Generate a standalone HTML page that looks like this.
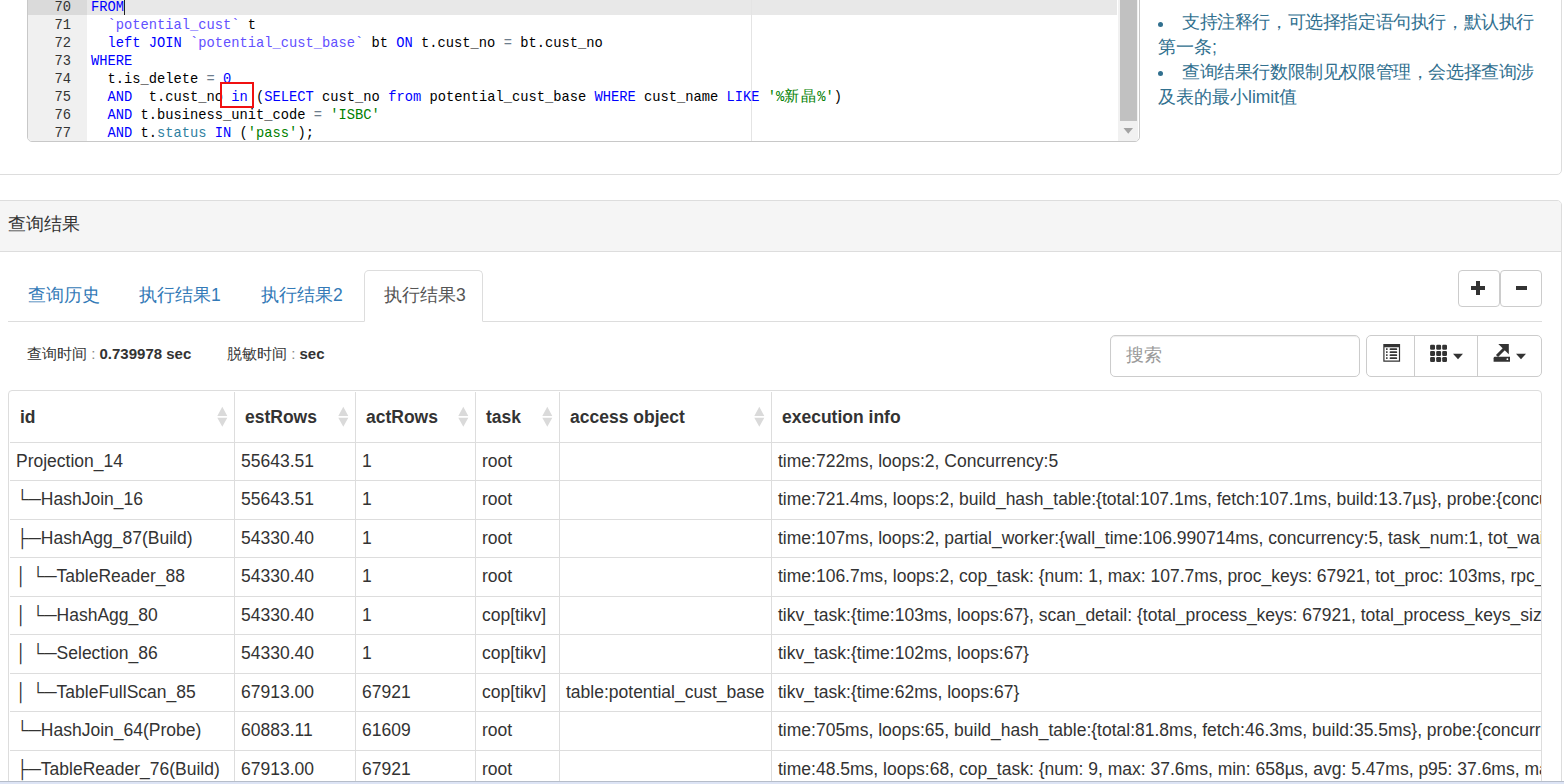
<!DOCTYPE html>
<html><head><meta charset="utf-8">
<style>
html,body{margin:0;padding:0;}
body{width:1564px;height:784px;overflow:hidden;position:relative;background:#fff;font-family:"Liberation Sans",sans-serif;color:#333;}
.abs{position:absolute;}
/* panel 1 */
#p1{left:-10px;top:-30px;width:1570px;height:203px;border:1px solid #ddd;border-radius:5px;background:#fff;}
/* editor */
#ed{left:27px;top:-10px;width:1111px;height:150px;border:1px solid #c8c8c8;border-radius:5px;overflow:hidden;background:#fff;}
#gut{left:0;top:0;width:59px;height:150px;background:#f0f0f0;}
.ln{position:absolute;margin-top:1px;left:0;width:43px;text-align:right;font-family:"Liberation Mono",monospace;font-size:13.75px;line-height:18px;color:#333;height:18px;}
.cl{position:absolute;margin-top:1px;left:63px;white-space:pre;font-family:"Liberation Mono",monospace;font-size:13.75px;line-height:18px;height:18px;color:#000;}
.k{color:#0000ff}.v{color:#6250ff}.o{color:#6d7d8d}.s{color:#008000}.n{color:#0000ff}.b{color:#2f7f9f}
#ruler{left:723px;top:0;width:1px;height:150px;background:#e4e4e4;}
#sbt{left:1090px;top:0;width:20px;height:150px;background:#f1f1f1;}
#sbth{left:1092px;top:0;width:17px;height:130px;background:#c1c1c1;}
/* tips */
.tip{position:absolute;font-size:17.5px;line-height:25px;color:#31708f;white-space:nowrap;}
.dot{position:absolute;width:5px;height:5px;border-radius:50%;background:#31708f;}
/* panel 2 */
#p2{left:-10px;top:200px;width:1570px;height:600px;border:1px solid #ddd;border-radius:5px;background:#fff;overflow:hidden;}
#p2h{left:0;top:0;width:1570px;height:50px;background:#f5f5f5;border-bottom:1px solid #ddd;}
.tab{position:absolute;top:270px;height:51px;font-size:17.5px;line-height:25px;color:#337ab7;white-space:nowrap;}
.tab span{position:absolute;top:13px;}
#tabline{left:8px;top:321px;width:1534px;height:1px;background:#ddd;}
.btn{position:absolute;border:1px solid #ccc;border-radius:4px;background:#fff;box-sizing:border-box;}
/* table */
#tbl{left:8px;top:390px;width:1534px;height:420px;border:1px solid #ddd;border-radius:4px;overflow:hidden;box-sizing:border-box;}
.row{position:absolute;left:1px;width:1531px;height:38px;border-top:1px solid #ddd;}
.c{position:absolute;top:0;height:100%;border-left:1px solid #ddd;font-size:17.5px;line-height:25px;white-space:nowrap;overflow:hidden;color:#333;}
.c span{position:absolute;left:6px;top:6px;}
.h{font-weight:bold;}
.h span{top:13px !important;}
.sort{position:absolute;}
#bottom{left:0;top:781px;width:1564px;height:3px;background:#dde4f5;border-top:1px solid #b6bdc9;box-sizing:border-box;}
</style></head><body>
<div id="p1" class="abs"></div>
<div id="ed" class="abs">
  <div id="gut" class="abs"></div>
  <div class="abs" style="left:0;top:0;width:59px;height:24px;background:#dadada"></div>
  <div class="abs" style="left:59px;top:0;width:1030px;height:24px;background:#e8e8e8"></div>
  <div id="ruler" class="abs"></div>
  <div class="abs" style="left:96px;top:8px;width:1px;height:16px;background:#222"></div>
  <div class="ln" style="top:7px">70</div>
  <div class="ln" style="top:25px">71</div>
  <div class="ln" style="top:43px">72</div>
  <div class="ln" style="top:61px">73</div>
  <div class="ln" style="top:79px">74</div>
  <div class="ln" style="top:97px">75</div>
  <div class="ln" style="top:115px">76</div>
  <div class="ln" style="top:133px">77</div>
  <div class="cl" style="top:7px"><span class="k">FROM</span></div>
  <div class="cl" style="top:25px">  <span class="v">`potential_cust`</span> t</div>
  <div class="cl" style="top:43px">  <span class="k">left JOIN</span> <span class="v">`potential_cust_base`</span> bt <span class="k">ON</span> t.cust_no <span class="o">=</span> bt.cust_no</div>
  <div class="cl" style="top:61px"><span class="k">WHERE</span></div>
  <div class="cl" style="top:79px">  t.is_delete <span class="o">=</span> <span class="n">0</span></div>
  <div class="cl" style="top:97px">  <span class="k">AND</span>  t.cust_no <span class="k">in</span> (<span class="k">SELECT</span> cust_no <span class="k">from</span> potential_cust_base <span class="k">WHERE</span> cust_name <span class="k">LIKE</span> <span class="s">'%<span style="font-size:15px;letter-spacing:1.5px">新晶</span>%'</span>)</div>
  <div class="cl" style="top:115px">  <span class="k">AND</span> t.business_unit_code <span class="o">=</span> <span class="s">'ISBC'</span></div>
  <div class="cl" style="top:133px">  <span class="k">AND</span> t.<span class="b">status</span> <span class="k">IN</span> (<span class="s">'pass'</span>);</div>
  <div id="sbt" class="abs"></div>
  <div id="sbth" class="abs"></div>
  <svg class="abs" style="left:1094px;top:136px" width="12" height="8"><path d="M1.5 1h9.5l-4.75 5.8z" fill="#a3a3a3"/></svg>
</div>
<div class="abs" style="left:220px;top:82px;width:30px;height:22px;border:2px solid #f01010;"></div>

<div class="dot" style="left:1158px;top:22px"></div>
<div class="tip" style="left:1182px;top:10px;letter-spacing:-0.4px">支持注释行，可选择指定语句执行，默认执行</div>
<div class="tip" style="left:1158px;top:35px">第一条;</div>
<div class="dot" style="left:1158px;top:71px"></div>
<div class="tip" style="left:1182px;top:60px;letter-spacing:-0.4px">查询结果行数限制见权限管理，会选择查询涉</div>
<div class="tip" style="left:1158px;top:85px">及表的最小limit值</div>

<div id="p2" class="abs"><div id="p2h" class="abs"></div></div>
<div class="abs" style="left:8px;top:212px;font-size:17.5px;line-height:25px;color:#333">查询结果</div>

<div id="tabline" class="abs"></div>
<div class="tab" style="left:9px;width:109px"><span style="left:19px">查询历史</span></div>
<div class="tab" style="left:121px;width:118px"><span style="left:18px">执行结果1</span></div>
<div class="tab" style="left:243px;width:118px"><span style="left:18px">执行结果2</span></div>
<div class="tab" style="left:364px;width:119px;height:52px;box-sizing:border-box;border:1px solid #ddd;border-bottom:1px solid #fff;border-radius:5px 5px 0 0;background:#fff;color:#555"><span style="left:19px;top:12px">执行结果3</span></div>

<div class="btn" style="left:1458px;top:270px;width:42px;height:37px"></div>
<div class="btn" style="left:1500px;top:270px;width:42px;height:37px"></div>
<svg class="abs" style="left:0;top:0;z-index:5" width="1564" height="400">
 <g fill="#333">
  <rect x="1471" y="286" width="14" height="4"/><rect x="1476" y="281" width="4" height="14"/>
  <rect x="1516" y="286" width="11" height="4"/>
 </g>
 <g fill="#333">
  <!-- list-alt -->
  <path d="M1383.3 344h16.8v17.8h-16.8z M1384.5 347.2v13.3h14.4v-13.3z" fill-rule="evenodd"/>
  <rect x="1386" y="348.3" width="1.6" height="1.6"/><rect x="1389.6" y="348.2" width="7.6" height="1.9" rx="0.9"/>
  <rect x="1386" y="351.3" width="1.6" height="1.6"/><rect x="1389.6" y="351.2" width="7.6" height="1.9" rx="0.9"/>
  <rect x="1386" y="354.3" width="1.6" height="1.6"/><rect x="1389.6" y="354.2" width="7.6" height="1.9" rx="0.9"/>
  <rect x="1386" y="357.3" width="1.6" height="1.6"/><rect x="1389.6" y="357.2" width="7.6" height="1.9" rx="0.9"/>
  <!-- th -->
  <rect x="1430.1" y="344.8" width="4.9" height="5" rx="1.2"/><rect x="1436.2" y="344.8" width="4.9" height="5" rx="1.2"/><rect x="1442.2" y="344.8" width="4.8" height="5" rx="1.2"/>
  <rect x="1430.1" y="350.9" width="4.9" height="5" rx="1.2"/><rect x="1436.2" y="350.9" width="4.9" height="5" rx="1.2"/><rect x="1442.2" y="350.9" width="4.8" height="5" rx="1.2"/>
  <rect x="1430.1" y="357" width="4.9" height="5" rx="1.2"/><rect x="1436.2" y="357" width="4.9" height="5" rx="1.2"/><rect x="1442.2" y="357" width="4.8" height="5" rx="1.2"/>
  <path d="M1453 353.7h10l-5 5.5z"/>
  <!-- export -->
  <path d="M1493.6 358.2q0-1.4 1.4-1.4h15v5h-16.4z"/>
  <circle cx="1507.4" cy="359.2" r="0.9" fill="#fff"/>
  <path d="M1498.3 344h10.5v10.3z"/>
  <path d="M1504.5 348.5l-7.5 7.5" stroke="#333" stroke-width="3"/>
  <path d="M1516 353.7h10l-5 5.5z"/>
 </g>
</svg>

<div class="abs" style="left:27px;top:343px;font-size:15px;line-height:21px;white-space:nowrap">查询时间<span style="color:#888"> : </span><b>0.739978 sec</b></div>
<div class="abs" style="left:227px;top:343px;font-size:15px;line-height:21px;white-space:nowrap">脱敏时间<span style="color:#888"> : </span><b>sec</b></div>

<div class="btn" style="left:1110px;top:335px;width:250px;height:42px;border-radius:5px;box-shadow:inset 0 1px 1px rgba(0,0,0,.075)"></div>
<div class="abs" style="left:1126px;top:343px;font-size:17.5px;line-height:25px;color:#999">搜索</div>
<div class="btn" style="left:1366px;top:335px;width:176px;height:42px;border-radius:5px"></div>
<div class="abs" style="left:1414px;top:336px;width:1px;height:40px;background:#ccc"></div>
<div class="abs" style="left:1477px;top:336px;width:1px;height:40px;background:#ccc"></div>

<div id="tbl" class="abs">
<div class="hrow abs" style="left:1px;top:1px;width:1531px;height:50px"><div class="c h" style="left:0px;width:224px;border-left:none;"><span style="left:10px">id</span><svg class="sort" style="left:206.7px;top:14px" width="11" height="22" viewBox="0 0 11 22"><path d="M0.3 10 L5.3 0.8 L10.3 10Z M0.3 11.7 L5.3 20.8 L10.3 11.7Z" fill="#dadada"/></svg></div><div class="c h" style="left:224px;width:121px;"><span style="left:10px">estRows</span><svg class="sort" style="left:102.7px;top:14px" width="11" height="22" viewBox="0 0 11 22"><path d="M0.3 10 L5.3 0.8 L10.3 10Z M0.3 11.7 L5.3 20.8 L10.3 11.7Z" fill="#dadada"/></svg></div><div class="c h" style="left:345px;width:120px;"><span style="left:10px">actRows</span><svg class="sort" style="left:101.7px;top:14px" width="11" height="22" viewBox="0 0 11 22"><path d="M0.3 10 L5.3 0.8 L10.3 10Z M0.3 11.7 L5.3 20.8 L10.3 11.7Z" fill="#dadada"/></svg></div><div class="c h" style="left:465px;width:84px;"><span style="left:10px">task</span><svg class="sort" style="left:65.7px;top:14px" width="11" height="22" viewBox="0 0 11 22"><path d="M0.3 10 L5.3 0.8 L10.3 10Z M0.3 11.7 L5.3 20.8 L10.3 11.7Z" fill="#dadada"/></svg></div><div class="c h" style="left:549px;width:212px;"><span style="left:10px">access object</span><svg class="sort" style="left:193.7px;top:14px" width="11" height="22" viewBox="0 0 11 22"><path d="M0.3 10 L5.3 0.8 L10.3 10Z M0.3 11.7 L5.3 20.8 L10.3 11.7Z" fill="#dadada"/></svg></div><div class="c h" style="left:761px;width:770px;"><span style="left:10px">execution info</span></div></div>
<div class="row" style="top:51px"><div class="c" style="left:0px;width:224px;border-left:none;"><span style="left:6px">Projection_14</span></div><div class="c" style="left:224px;width:121px;"><span style="left:6px">55643.51</span></div><div class="c" style="left:345px;width:120px;"><span style="left:6px">1</span></div><div class="c" style="left:465px;width:84px;"><span style="left:6px">root</span></div><div class="c" style="left:549px;width:212px;"></div><div class="c" style="left:761px;width:770px;"><span style="left:6px">time:722ms, loops:2, Concurrency:5</span></div></div>
<div class="row" style="top:89px"><div class="c" style="left:0px;width:224px;border-left:none;"><span style="left:6px">└─HashJoin_16</span></div><div class="c" style="left:224px;width:121px;"><span style="left:6px">55643.51</span></div><div class="c" style="left:345px;width:120px;"><span style="left:6px">1</span></div><div class="c" style="left:465px;width:84px;"><span style="left:6px">root</span></div><div class="c" style="left:549px;width:212px;"></div><div class="c" style="left:761px;width:770px;"><span style="left:6px">time:721.4ms, loops:2, build_hash_table:{total:107.1ms, fetch:107.1ms, build:13.7µs}, probe:{concurrency:5, total:614.4ms, max:139.7ms}</span></div></div>
<div class="row" style="top:128px"><div class="c" style="left:0px;width:224px;border-left:none;"><span style="left:6px">├─HashAgg_87(Build)</span></div><div class="c" style="left:224px;width:121px;"><span style="left:6px">54330.40</span></div><div class="c" style="left:345px;width:120px;"><span style="left:6px">1</span></div><div class="c" style="left:465px;width:84px;"><span style="left:6px">root</span></div><div class="c" style="left:549px;width:212px;"></div><div class="c" style="left:761px;width:770px;"><span style="left:6px">time:107ms, loops:2, partial_worker:{wall_time:106.990714ms, concurrency:5, task_num:1, tot_wait:106.9ms}</span></div></div>
<div class="row" style="top:166px"><div class="c" style="left:0px;width:224px;border-left:none;"><span style="left:6px">│ └─TableReader_88</span></div><div class="c" style="left:224px;width:121px;"><span style="left:6px">54330.40</span></div><div class="c" style="left:345px;width:120px;"><span style="left:6px">1</span></div><div class="c" style="left:465px;width:84px;"><span style="left:6px">root</span></div><div class="c" style="left:549px;width:212px;"></div><div class="c" style="left:761px;width:770px;"><span style="left:6px">time:106.7ms, loops:2, cop_task: {num: 1, max: 107.7ms, proc_keys: 67921, tot_proc: 103ms, rpc_num: 1}</span></div></div>
<div class="row" style="top:205px"><div class="c" style="left:0px;width:224px;border-left:none;"><span style="left:6px">│ └─HashAgg_80</span></div><div class="c" style="left:224px;width:121px;"><span style="left:6px">54330.40</span></div><div class="c" style="left:345px;width:120px;"><span style="left:6px">1</span></div><div class="c" style="left:465px;width:84px;"><span style="left:6px">cop[tikv]</span></div><div class="c" style="left:549px;width:212px;"></div><div class="c" style="left:761px;width:770px;"><span style="left:6px">tikv_task:{time:103ms, loops:67}, scan_detail: {total_process_keys: 67921, total_process_keys_size: 1234}</span></div></div>
<div class="row" style="top:243px"><div class="c" style="left:0px;width:224px;border-left:none;"><span style="left:6px">│ └─Selection_86</span></div><div class="c" style="left:224px;width:121px;"><span style="left:6px">54330.40</span></div><div class="c" style="left:345px;width:120px;"><span style="left:6px">1</span></div><div class="c" style="left:465px;width:84px;"><span style="left:6px">cop[tikv]</span></div><div class="c" style="left:549px;width:212px;"></div><div class="c" style="left:761px;width:770px;"><span style="left:6px">tikv_task:{time:102ms, loops:67}</span></div></div>
<div class="row" style="top:282px"><div class="c" style="left:0px;width:224px;border-left:none;"><span style="left:6px">│ └─TableFullScan_85</span></div><div class="c" style="left:224px;width:121px;"><span style="left:6px">67913.00</span></div><div class="c" style="left:345px;width:120px;"><span style="left:6px">67921</span></div><div class="c" style="left:465px;width:84px;"><span style="left:6px">cop[tikv]</span></div><div class="c" style="left:549px;width:212px;"><span style="left:6px">table:potential_cust_base</span></div><div class="c" style="left:761px;width:770px;"><span style="left:6px">tikv_task:{time:62ms, loops:67}</span></div></div>
<div class="row" style="top:320px"><div class="c" style="left:0px;width:224px;border-left:none;"><span style="left:6px">└─HashJoin_64(Probe)</span></div><div class="c" style="left:224px;width:121px;"><span style="left:6px">60883.11</span></div><div class="c" style="left:345px;width:120px;"><span style="left:6px">61609</span></div><div class="c" style="left:465px;width:84px;"><span style="left:6px">root</span></div><div class="c" style="left:549px;width:212px;"></div><div class="c" style="left:761px;width:770px;"><span style="left:6px">time:705ms, loops:65, build_hash_table:{total:81.8ms, fetch:46.3ms, build:35.5ms}, probe:{concurrency:5}</span></div></div>
<div class="row" style="top:359px"><div class="c" style="left:0px;width:224px;border-left:none;"><span style="left:6px">├─TableReader_76(Build)</span></div><div class="c" style="left:224px;width:121px;"><span style="left:6px">67913.00</span></div><div class="c" style="left:345px;width:120px;"><span style="left:6px">67921</span></div><div class="c" style="left:465px;width:84px;"><span style="left:6px">root</span></div><div class="c" style="left:549px;width:212px;"></div><div class="c" style="left:761px;width:770px;"><span style="left:6px">time:48.5ms, loops:68, cop_task: {num: 9, max: 37.6ms, min: 658µs, avg: 5.47ms, p95: 37.6ms, max_proc_keys: 1}</span></div></div>

</div>
<div id="bottom" class="abs"></div>
</body></html>
